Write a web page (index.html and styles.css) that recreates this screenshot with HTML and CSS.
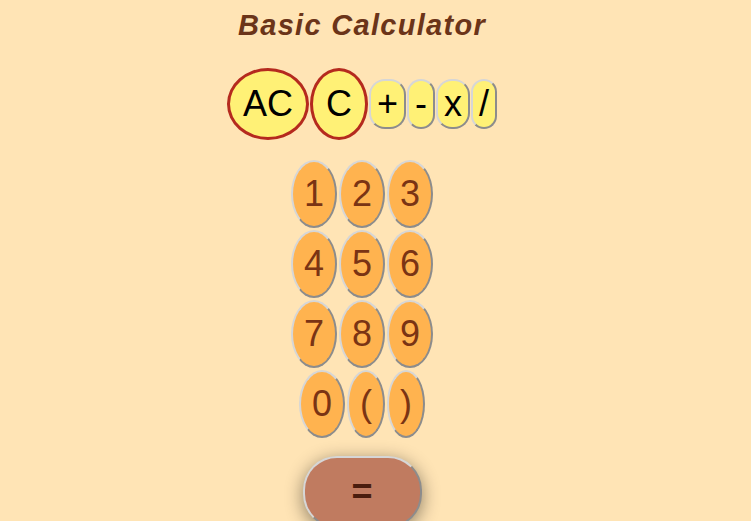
FILE: index.html
```html
<!DOCTYPE html>
<html lang="en">
<head>
    <meta charset="UTF-8">
    <meta name="viewport" content="width=device-width, initial-scale=1.0">
    <title>Basic Calculator</title>
    <link rel="stylesheet" href="styles.css">
</head>
<body>
    <div class="calculadora">
        <h1 class="titulo">Basic Calculator</h1>

        <div class="fila fila-operaciones">
            <button class="btn btn-borrar">AC</button>
            <button class="btn btn-borrar">C</button>
            <button class="btn btn-operador">+</button>
            <button class="btn btn-operador">-</button>
            <button class="btn btn-operador">x</button>
            <button class="btn btn-operador">/</button>
        </div>

        <div class="teclado">
            <div class="fila">
                <button class="btn btn-numero">1</button>
                <button class="btn btn-numero">2</button>
                <button class="btn btn-numero">3</button>
            </div>
            <div class="fila">
                <button class="btn btn-numero">4</button>
                <button class="btn btn-numero">5</button>
                <button class="btn btn-numero">6</button>
            </div>
            <div class="fila">
                <button class="btn btn-numero">7</button>
                <button class="btn btn-numero">8</button>
                <button class="btn btn-numero">9</button>
            </div>
            <div class="fila">
                <button class="btn btn-numero">0</button>
                <button class="btn btn-numero">(</button>
                <button class="btn btn-numero">)</button>
            </div>
        </div>

        <div class="fila">
            <button class="btn btn-igual">=</button>
        </div>
    </div>
</body>
</html>
```

FILE: styles.css
```css
:root {
    --color-fondo: #ffe4b5;
    --color-marron: #6b3419;
}

body {
    font-family: "Liberation Sans", Arial, sans-serif;
    background-color: var(--color-fondo);
    margin: 0;
    padding: 0;
}

.calculadora {
    width: 724px;
    text-align: center;
}

.titulo {
    font-family: "Liberation Sans", Arial, sans-serif;
    font-style: italic;
    font-weight: bold;
    font-size: 29px;
    letter-spacing: 1.3px;
    color: var(--color-marron);
    margin: 0;
    padding-top: 8px;
    line-height: 34px;
}

.fila {
    display: flex;
    justify-content: center;
    align-items: center;
    gap: 2px;
}

.fila-operaciones {
    gap: 1px;
    margin-top: 26px;
}

.teclado {
    display: flex;
    flex-direction: column;
    gap: 2px;
    margin: 20px 0 18px;
}

.btn {
    font-family: "Liberation Sans", Arial, sans-serif;
    font-size: 36px;
    line-height: 42px;
    border: 2px solid #d6d6d6;
    border-right-color: #8c8c8c;
    border-bottom-color: #8c8c8c;
    margin: 0;
    cursor: pointer;
}

.btn-borrar {
    background-color: #fff176;
    color: #000;
    border: 3px solid #b52a1e;
    border-radius: 50%;
    padding: 12px 13px;
}

.btn-operador {
    background-color: #fff176;
    color: #000;
    border-radius: 16px;
    padding: 2px 6px;
}

.btn-numero {
    background-color: #ffb34f;
    color: #7a3414;
    border-radius: 50%;
    padding: 11px 11px;
}

.btn-igual {
    width: 119px;
    height: 72px;
    background-color: #c07b60;
    color: #4a1d0e;
    font-weight: bold;
    border-radius: 34px;
    box-shadow: 0 4px 18px rgba(0, 0, 0, 0.45);
}
```
